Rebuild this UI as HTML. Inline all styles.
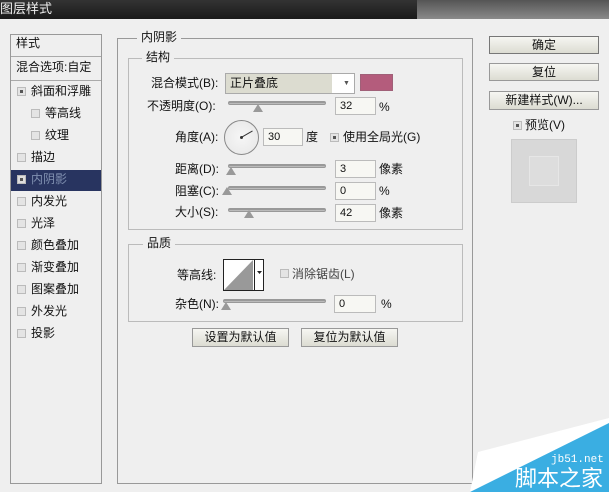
<!DOCTYPE html>
<html><head><meta charset="utf-8"><style>
*{margin:0;padding:0;box-sizing:border-box}
body{width:609px;height:492px;overflow:hidden;background:#efefef;position:relative;font-family:"Liberation Sans","Noto Sans CJK SC",sans-serif;font-size:12px;color:#111}
.a{position:absolute}
.t{position:absolute;white-space:nowrap;line-height:14px}
.cb{position:absolute;width:9px;height:9px;border:1px solid #bbb;background:#e4e4e4}
.cb.on::after{content:"";position:absolute;left:2px;top:2px;width:3px;height:3px;background:#555}
.inp{position:absolute;height:18px;border:1px solid #bbb;background:#f7f7f3;padding-left:4px;line-height:16px;font-size:11px}
.sl{position:absolute;height:4px;background:linear-gradient(#888,#ccc);border:1px solid #999;border-radius:2px}
.th{position:absolute;width:0;height:0;border-left:5px solid transparent;border-right:5px solid transparent;border-bottom:8px solid #999}
.btn{position:absolute;border:1px solid #999;background:linear-gradient(#f6f6f2,#dcdcd2);text-align:center;line-height:16px;font-size:12px}
.fs{position:absolute;border:1px solid #bbb}
.lg{position:absolute;background:#efefef;padding:0 4px;line-height:14px}
</style></head><body>
<div class="a" style="left:0;top:0;width:609px;height:19px;background:linear-gradient(#333,#1a1a1a)"></div>
<div class="a" style="left:417px;top:0;width:192px;height:19px;background:linear-gradient(#555,#8a8a8a)"></div>
<div class="t" style="left:0;top:2px;color:#eee;font-size:13px">图层样式</div>

<div class="fs" style="left:10px;top:34px;width:92px;height:450px;border-color:#999"></div>
<div class="t" style="left:16px;top:36px">样式</div>
<div class="a" style="left:11px;top:56px;width:90px;height:1px;background:#aaa"></div>
<div class="t" style="left:16px;top:60px">混合选项:自定</div>
<div class="a" style="left:11px;top:80px;width:90px;height:1px;background:#aaa"></div>
<div class="cb on" style="left:17px;top:87px"></div><div class="t" style="left:31px;top:84px">斜面和浮雕</div>
<div class="cb" style="left:31px;top:109px"></div><div class="t" style="left:45px;top:106px">等高线</div>
<div class="cb" style="left:31px;top:131px"></div><div class="t" style="left:45px;top:128px">纹理</div>
<div class="cb" style="left:17px;top:153px"></div><div class="t" style="left:31px;top:150px">描边</div>
<div class="a" style="left:11px;top:170px;width:90px;height:21px;background:#283460"></div>
<div class="cb on" style="left:17px;top:175px;background:#ddd"></div><div class="t" style="left:31px;top:172px;color:#8090b0">内阴影</div>
<div class="cb" style="left:17px;top:197px"></div><div class="t" style="left:31px;top:194px">内发光</div>
<div class="cb" style="left:17px;top:219px"></div><div class="t" style="left:31px;top:216px">光泽</div>
<div class="cb" style="left:17px;top:241px"></div><div class="t" style="left:31px;top:238px">颜色叠加</div>
<div class="cb" style="left:17px;top:263px"></div><div class="t" style="left:31px;top:260px">渐变叠加</div>
<div class="cb" style="left:17px;top:285px"></div><div class="t" style="left:31px;top:282px">图案叠加</div>
<div class="cb" style="left:17px;top:307px"></div><div class="t" style="left:31px;top:304px">外发光</div>
<div class="cb" style="left:17px;top:329px"></div><div class="t" style="left:31px;top:326px">投影</div>

<div class="fs" style="left:117px;top:38px;width:356px;height:446px;border-color:#999"></div>
<div class="lg" style="left:137px;top:30px">内阴影</div>
<div class="fs" style="left:128px;top:58px;width:335px;height:172px"></div>
<div class="lg" style="left:142px;top:50px">结构</div>

<div class="t" style="left:151px;top:76px">混合模式(B):</div>
<div class="a" style="left:225px;top:73px;width:130px;height:21px;border:1px solid #aaa;background:linear-gradient(90deg,#dcdcd0 83%,#fff 83%)"></div>
<div class="t" style="left:230px;top:76px">正片叠底</div>
<div class="t" style="left:343px;top:77px;font-size:7px;color:#555">▼</div>
<div class="a" style="left:360px;top:74px;width:33px;height:17px;background:#b45c7c;border:1px solid #a06078"></div>

<div class="t" style="left:147px;top:99px">不透明度(O):</div>
<div class="sl" style="left:228px;top:101px;width:98px"></div><div class="th" style="left:253px;top:104px"></div>
<div class="inp" style="left:335px;top:97px;width:41px">32</div><div class="t" style="left:379px;top:100px">%</div>

<div class="t" style="left:175px;top:130px">角度(A):</div>
<div class="a" style="left:224px;top:120px;width:35px;height:35px;border:1px solid #888;border-radius:50%;background:radial-gradient(#f6f6f6,#e6e6e6)"></div>
<div class="a" style="left:241px;top:137px;width:13px;height:1px;background:#333;transform:rotate(-30deg);transform-origin:0 0"></div>
<div class="a" style="left:240px;top:136px;width:3px;height:3px;background:#333;border-radius:50%"></div>
<div class="inp" style="left:263px;top:128px;width:40px">30</div><div class="t" style="left:306px;top:130px">度</div>
<div class="cb on" style="left:330px;top:133px"></div><div class="t" style="left:343px;top:130px">使用全局光(G)</div>

<div class="t" style="left:175px;top:162px">距离(D):</div>
<div class="sl" style="left:228px;top:164px;width:98px"></div><div class="th" style="left:226px;top:167px"></div>
<div class="inp" style="left:335px;top:160px;width:41px">3</div><div class="t" style="left:379px;top:162px">像素</div>
<div class="t" style="left:175px;top:184px">阻塞(C):</div>
<div class="sl" style="left:228px;top:186px;width:98px"></div><div class="th" style="left:222px;top:187px"></div>
<div class="inp" style="left:335px;top:182px;width:41px">0</div><div class="t" style="left:379px;top:184px">%</div>
<div class="t" style="left:175px;top:205px">大小(S):</div>
<div class="sl" style="left:228px;top:208px;width:98px"></div><div class="th" style="left:244px;top:210px"></div>
<div class="inp" style="left:335px;top:204px;width:41px">42</div><div class="t" style="left:379px;top:206px">像素</div>

<div class="fs" style="left:128px;top:244px;width:335px;height:78px"></div>
<div class="lg" style="left:143px;top:236px">品质</div>
<div class="t" style="left:177px;top:268px">等高线:</div>
<div class="a" style="left:223px;top:259px;width:41px;height:32px;border:1px solid #222;background:#fff"></div>
<svg class="a" style="left:224px;top:260px" width="39" height="30"><polygon points="0,30 29,0 29,30" fill="#999"/><rect x="31" y="0" width="8" height="30" fill="#fff"/><line x1="30.5" y1="0" x2="30.5" y2="30" stroke="#222"/><polygon points="33,11 38,11 35.5,14" fill="#222"/></svg>
<div class="cb" style="left:280px;top:269px"></div><div class="t" style="left:292px;top:267px;color:#444">消除锯齿(L)</div>
<div class="t" style="left:175px;top:297px">杂色(N):</div>
<div class="sl" style="left:223px;top:299px;width:103px"></div><div class="th" style="left:221px;top:302px"></div>
<div class="inp" style="left:334px;top:295px;width:42px">0</div><div class="t" style="left:381px;top:297px">%</div>

<div class="btn" style="left:192px;top:328px;width:97px;height:19px">设置为默认值</div>
<div class="btn" style="left:301px;top:328px;width:97px;height:19px">复位为默认值</div>

<div class="btn" style="left:489px;top:36px;width:110px;height:18px;border-color:#777">确定</div>
<div class="btn" style="left:489px;top:63px;width:110px;height:18px">复位</div>
<div class="btn" style="left:489px;top:91px;width:110px;height:19px">新建样式(W)...</div>
<div class="cb on" style="left:513px;top:121px"></div><div class="t" style="left:525px;top:118px">预览(V)</div>
<div class="a" style="left:511px;top:139px;width:66px;height:64px;background:#d8d8d8;border:1px solid #ccc"></div>
<div class="a" style="left:529px;top:156px;width:30px;height:30px;background:#ddd;border:1px solid #e6e6e6"></div>

<svg class="a" style="left:0;top:0" width="609" height="492"><polygon points="609,418 478,452 470,492 609,492" fill="#fff"/><polygon points="609,423 609,492 470,492" fill="#3aaee2"/></svg>
<div class="t" style="left:551px;top:454px;color:#fff;font-size:11px;line-height:12px;font-family:'Liberation Mono',monospace">jb51.net</div>
<div class="t" style="left:515px;top:467px;color:#fff;font-size:22px;line-height:24px">脚本之家</div>
</body></html>
